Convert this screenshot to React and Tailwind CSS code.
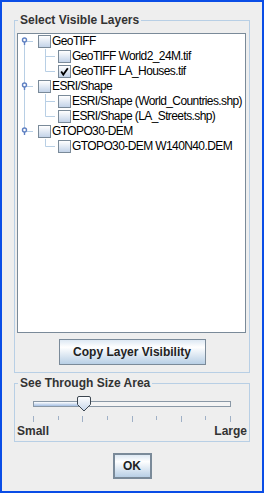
import React from 'react';

const layers = [
  { name: 'GeoTIFF', children: [{ name: 'GeoTIFF World2_24M.tif' }, { name: 'GeoTIFF LA_Houses.tif', checked: true }] },
  { name: 'ESRI/Shape', children: [{ name: 'ESRI/Shape (World_Countries.shp)' }, { name: 'ESRI/Shape (LA_Streets.shp)' }] },
  { name: 'GTOPO30-DEM', children: [{ name: 'GTOPO30-DEM W140N40.DEM' }] },
];

const LINE = '#b8cfe5';

const CheckBox = ({ checked }) => (
  <div className="w-[13px] h-[13px] shrink-0 border border-[#7a8a99] bg-linear-to-b from-white to-[#c3d3e8]">
    {checked && (
      <svg width="11" height="11" viewBox="0 0 11 11">
        <path d="M2.2 5.6 L4.3 8.6 L8.8 2.2" fill="none" stroke="#000" strokeWidth="1.8" />
      </svg>
    )}
  </div>
);

const RootGutter = ({ first, last }) => (
  <svg width="20" height="15" className="shrink-0">
    {!first && <line x1="6.5" y1="0" x2="6.5" y2="4" stroke={LINE} />}
    {!last && <line x1="6.5" y1="11" x2="6.5" y2="15" stroke={LINE} />}
    <line x1="9" y1="7.5" x2="15" y2="7.5" stroke={LINE} />
    <circle cx="6.5" cy="6" r="2" fill="none" stroke="#5f80c2" strokeWidth="1.4" />
    <line x1="6.5" y1="8" x2="6.5" y2="11" stroke="#5f80c2" strokeWidth="1.4" />
  </svg>
);

const ChildGutter = ({ parentLast, last }) => (
  <svg width="40" height="15" className="shrink-0">
    {!parentLast && <line x1="6.5" y1="0" x2="6.5" y2="15" stroke={LINE} />}
    <line x1="27.5" y1="0" x2="27.5" y2={last ? 7.5 : 15} stroke={LINE} />
    <line x1="27.5" y1="7.5" x2="37" y2="7.5" stroke={LINE} />
  </svg>
);

const Row = ({ gutter, checked, label }) => (
  <div className="flex items-center h-[15px]">
    {gutter}
    <CheckBox checked={checked} />
    <span className="ml-[1px] text-[12px] leading-[15px] tracking-[-0.6px] text-black whitespace-nowrap">{label}</span>
  </div>
);

const Slider = () => {
  const ticks = Array.from({ length: 9 }, (_, i) => 18 + i * 24.625);
  return (
    <svg width="234" height="26" className="block">
      <defs>
        <linearGradient id="fill" x1="0" y1="0" x2="0" y2="1">
          <stop offset="0" stopColor="#ffffff" />
          <stop offset="1" stopColor="#a5bfe3" />
        </linearGradient>
        <linearGradient id="thumb" x1="0" y1="0" x2="0" y2="1">
          <stop offset="0" stopColor="#ffffff" />
          <stop offset="1" stopColor="#c5d5ea" />
        </linearGradient>
      </defs>
      <rect x="18.5" y="5.5" width="197" height="5" fill="#f4f4f4" stroke="#8a98a6" />
      <rect x="19" y="6" width="44" height="4" fill="url(#fill)" />
      {ticks.map((x, i) => (
        <line key={i} x1={Math.round(x) + 0.5} y1="20" x2={Math.round(x) + 0.5} y2={i % 2 === 0 ? 26 : 24} stroke="#9fb0c6" />
      ))}
      <path d="M62.5 2 Q62.5 0.5 64 0.5 H74 Q75.5 0.5 75.5 2 V8.5 L69 15 L62.5 8.5 Z" fill="url(#thumb)" stroke="#3c4650" />
    </svg>
  );
};

const App = () => (
  <div className="w-[264px] h-[493px] border-2 border-[#0a4de6] bg-[#eeeeee] flex flex-col font-['Liberation_Sans',Arial,sans-serif] text-[#333333]">
    <fieldset className="mt-[11px] ml-[12px] w-[236px] min-w-0 border border-[#b8cfe5] px-[2px] pt-[6px] pb-[7px]">
      <legend className="ml-[1px] px-[2px] text-[12px] leading-[14px] font-bold">Select Visible Layers</legend>
      <div className="flex flex-col items-center">
        <div className="w-[229px] h-[300px] self-start border border-[#7a8a99] bg-white">
          {layers.map((l, i) => (
            <div key={l.name}>
              <Row gutter={<RootGutter first={i === 0} last={i === layers.length - 1} />} label={l.name} />
              {l.children.map((c, j) => (
                <Row
                  key={c.name}
                  gutter={<ChildGutter parentLast={i === layers.length - 1} last={j === l.children.length - 1} />}
                  checked={c.checked}
                  label={c.name}
                />
              ))}
            </div>
          ))}
        </div>
        <button className="mt-[6px] w-[147px] h-[26px] border border-[#7a8a99] bg-linear-to-b from-[#dde8f3] via-white via-30% to-[#b8cfe5] text-[12px] font-bold text-[#222]">
          Copy Layer Visibility
        </button>
      </div>
    </fieldset>

    <fieldset className="mt-[3px] ml-[12px] w-[236px] min-w-0 border border-[#b8cfe5] pt-[6px] pb-[3px]">
      <legend className="ml-[3px] px-[2px] text-[12px] leading-[14px] font-bold">See Through Size Area</legend>
      <Slider />
      <div className="mt-[2px] px-[2px] flex justify-between text-[12px] leading-[14px] font-bold">
        <span>Small</span>
        <span>Large</span>
      </div>
    </fieldset>

    <button className="mt-[11px] self-center w-[39px] h-[26px] border-2 border-[#7a8a99] bg-linear-to-b from-[#dde8f3] via-white via-30% to-[#b8cfe5] text-[12px] font-bold text-[#222]">
      OK
    </button>
  </div>
);

export default App;
